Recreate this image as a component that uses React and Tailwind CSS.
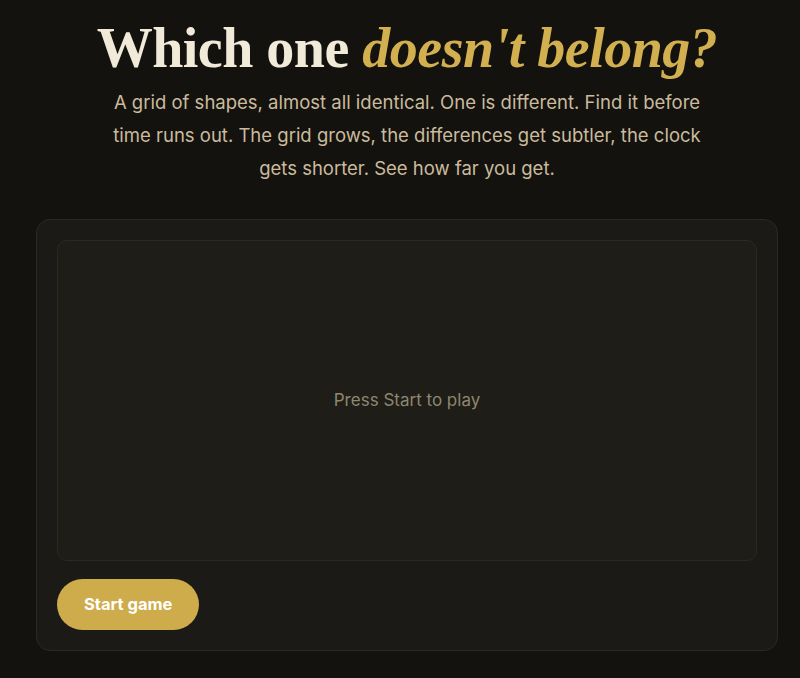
import React from "react";

const serif = { fontFamily: '"Liberation Serif", "DejaVu Serif", serif' };

export default function App() {
  return (
    <div
      className="min-h-[678px] w-full bg-[#13120f] pt-[16px]"
      style={{ fontFamily: '"Inter", "Noto Sans", sans-serif' }}
    >
      <header className="ml-[36px] w-[742px] text-center">
        <h1
          className="text-[56px] font-bold leading-[64px] tracking-[-0.5px] text-[#f2ead9]"
          style={serif}
        >
          Which one <em className="text-[#d2b04f]">doesn't belong?</em>
        </h1>
        <p className="mx-auto mt-[6px] w-[602px] text-[18.5px] leading-[33px] text-[#cbbb9c]">
          A grid of shapes, almost all identical. One is different. Find it before time runs out.
          The grid grows, the differences get subtler, the clock gets shorter. See how far you get.
        </p>
      </header>

      <section className="ml-[36px] mt-[34px] w-[742px] rounded-[14px] border border-[#2a2922] bg-[#1b1a16] p-[20px]">
        <div className="flex h-[321px] items-center justify-center rounded-[10px] border border-[#2a2923] bg-[#1e1d18]">
          <span className="text-[17px] text-[#8f8670]">Press Start to play</span>
        </div>
        <button className="mt-[18px] h-[51px] rounded-full bg-[#ceac4b] px-[27px] text-[16.5px] font-bold text-white">
          Start game
        </button>
      </section>
    </div>
  );
}
